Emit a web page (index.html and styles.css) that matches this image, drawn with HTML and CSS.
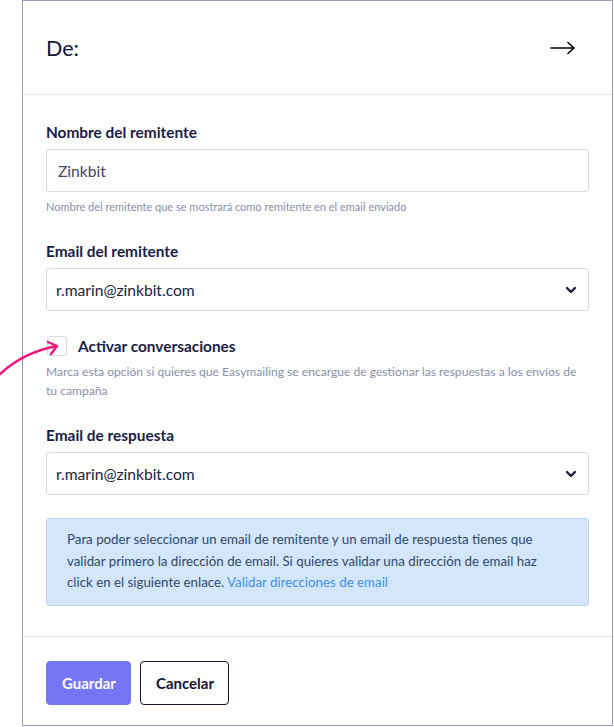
FILE: index.html
```html
<!DOCTYPE html>
<html lang="es">
<head>
<meta charset="utf-8">
<title>De:</title>
<link rel="stylesheet" href="styles.css">
</head>
<body>
<div class="page">
  <section class="panel">
    <header class="panel-header">
      <h1 class="title">De:</h1>
      <svg class="arrow-right" width="26" height="14" viewBox="0 0 26 14" aria-hidden="true">
        <path d="M1 7 H24 M18 1.5 L24 7 L18 12.5" fill="none" stroke="#000" stroke-width="1.6" stroke-linecap="round" stroke-linejoin="round"/>
      </svg>
    </header>
    <div class="panel-body">
      <div class="field">
        <label class="label">Nombre del remitente</label>
        <div class="input">Zinkbit</div>
        <p class="help help-small">Nombre del remitente que se mostrará como remitente en el email enviado</p>
      </div>
      <div class="field">
        <label class="label">Email del remitente</label>
        <div class="input select">
          <span class="value">r.marin@zinkbit.com</span>
          <svg class="chevron" width="12" height="8" viewBox="0 0 12 8" aria-hidden="true"><path d="M2 2 L6 6 L10 2" fill="none" stroke="#1b1d45" stroke-width="2.4" stroke-linecap="round" stroke-linejoin="round"/></svg>
        </div>
      </div>
      <div class="field">
        <div class="check-row">
          <span class="checkbox"></span>
          <span class="check-label">Activar conversaciones</span>
        </div>
        <p class="help help-check">Marca esta opción si quieres que Easymailing se encargue de gestionar las respuestas a los envíos de tu campaña</p>
      </div>
      <div class="field">
        <label class="label">Email de respuesta</label>
        <div class="input select">
          <span class="value">r.marin@zinkbit.com</span>
          <svg class="chevron" width="12" height="8" viewBox="0 0 12 8" aria-hidden="true"><path d="M2 2 L6 6 L10 2" fill="none" stroke="#1b1d45" stroke-width="2.4" stroke-linecap="round" stroke-linejoin="round"/></svg>
        </div>
      </div>
      <div class="info">
        Para poder seleccionar un email de remitente y un email de respuesta tienes que validar primero la dirección de email. Si quieres validar una dirección de email haz click en el siguiente enlace. <a class="info-link" href="#">Validar direcciones de email</a>
      </div>
    </div>
    <footer class="panel-footer">
      <button class="btn btn-primary" type="button">Guardar</button>
      <button class="btn btn-outline" type="button">Cancelar</button>
    </footer>
  </section>
  <svg class="pointer" width="64" height="40" viewBox="0 0 64 40" aria-hidden="true">
    <path d="M0 36 Q24 14 57 8" fill="none" stroke="#f0177c" stroke-width="2.4" stroke-linecap="round"/>
    <path d="M48 4 L57 8 L51 16" fill="none" stroke="#f0177c" stroke-width="2.4" stroke-linecap="round" stroke-linejoin="round"/>
  </svg>
</div>
</body>
</html>
```
FILE: styles.css
```css
* { box-sizing: border-box; }
html, body { margin: 0; padding: 0; background: #fff; }
body {
  font-family: Lato, "Noto Sans", "Liberation Sans", sans-serif;
  color: #1b1d45;
}
.page {
  position: relative;
  width: 614px;
  height: 727px;
  overflow: hidden;
}
.panel {
  margin-left: 22px;
  width: 591px;
  height: 726px;
  border: 1px solid #9a9db8;
  display: flex;
  flex-direction: column;
  background: #fff;
}
.panel-header {
  height: 94px;
  border-bottom: 1px solid #e3e5f1;
  display: flex;
  align-items: center;
  justify-content: space-between;
  padding: 0 36px 0 23px;
}
.title {
  margin: 0;
  font-size: 21.5px;
  font-weight: 400;
  color: #121436;
}
.arrow-right { display: block; margin-top: 1px; }
.panel-body {
  padding: 25px 23px 30px 23px;
  border-bottom: 1px solid #e3e5f1;
}
.field { margin-bottom: 23px; }
.label {
  display: block;
  font-size: 15.4px;
  font-weight: 700;
  line-height: 24px;
  color: #1b1d45;
  margin-bottom: 5px;
}
.input {
  height: 43px;
  border: 1px solid #d6d9e6;
  border-radius: 3px;
  padding: 0 11px;
  display: flex;
  align-items: center;
  font-size: 15.6px;
  color: #42475f;
}
.select { padding: 0 11px 0 9px; justify-content: space-between; color: #1b1d45; }
.chevron { display: block; margin-right: 0; }
.help {
  margin: 6px 0 0;
  font-size: 12px;
  line-height: 18px;
  color: #8a8fa8;
}
.help-small { font-size: 11px; }
.check-row {
  display: flex;
  align-items: center;
  height: 24px;
}
.checkbox {
  width: 20px;
  height: 20px;
  border: 1px solid #d6d9e6;
  border-radius: 3px;
  margin-left: 1px;
  margin-right: 11px;
}
.check-label {
  font-size: 15.4px;
  font-weight: 700;
  color: #1b1d45;
}
.help-check {
  margin-top: 4px;
  line-height: 19px;
  font-size: 12.1px;
  max-width: 536px;
}
.info {
  background: #d4e6fb;
  border: 1px solid #b9d6f5;
  border-radius: 3px;
  padding: 10px 48px 11px 20px;
  font-size: 13.3px;
  line-height: 21.5px;
  color: #2e4a6d;
}
.info-link { color: #3b93e6; text-decoration: none; }
.panel-footer {
  flex: 1;
  display: flex;
  align-items: flex-start;
  gap: 9px;
  padding: 24px 23px 0;
}
.btn {
  height: 44px;
  border-radius: 4px;
  font-family: inherit;
  font-size: 15px;
  font-weight: 700;
  padding: 0 15px;
  cursor: pointer;
}
.btn-primary {
  width: 85px;
  background: #7576f5;
  border: 1px solid #7576f5;
  color: #fff;
}
.btn-outline {
  width: 89px;
  background: #fff;
  border: 1px solid #121436;
  color: #121436;
}
.pointer {
  position: absolute;
  left: 0;
  top: 338px;
}
```
